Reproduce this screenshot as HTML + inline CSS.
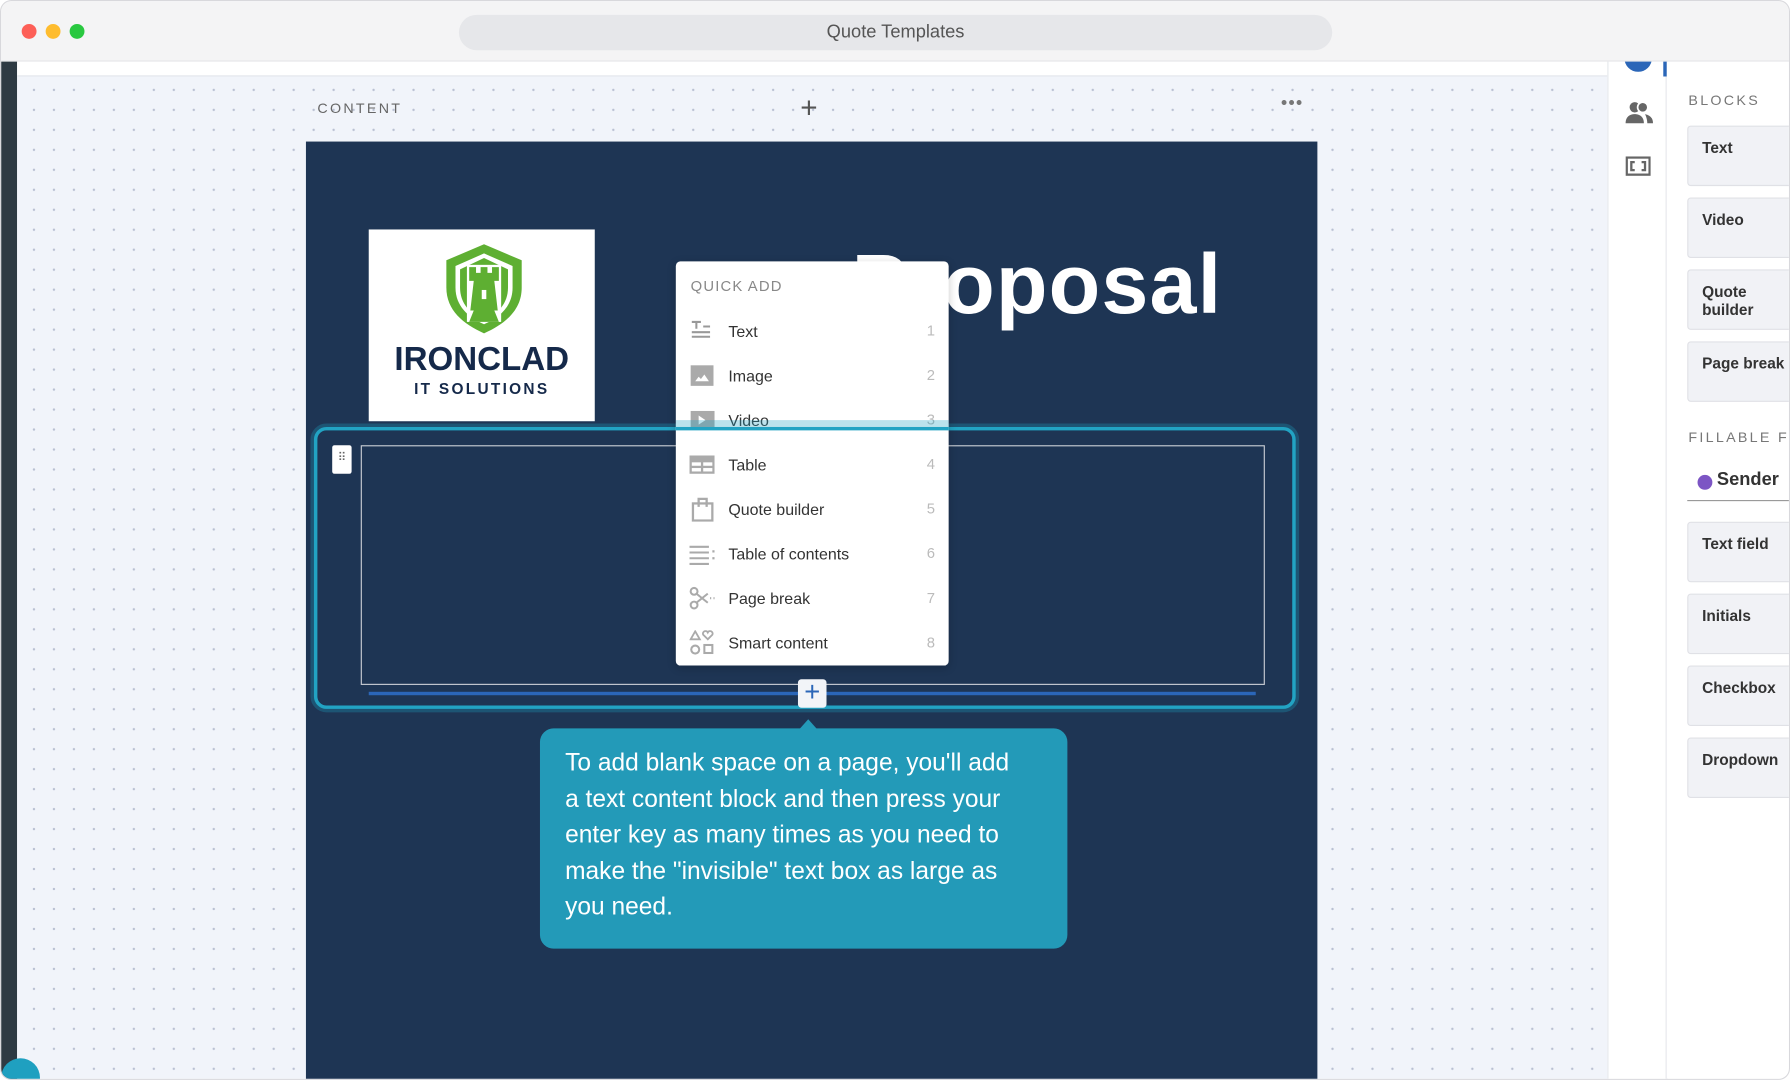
<!DOCTYPE html>
<html><head><meta charset="utf-8"><style>
*{margin:0;padding:0;box-sizing:border-box}
html,body{width:1790px;height:1080px;overflow:hidden;background:#fff;font-family:"Liberation Sans",sans-serif}
#s{position:absolute;left:0;top:0;width:1568px;height:946px;transform:scale(1.14158);transform-origin:0 0;background:#fff;border:1px solid #d8d8dc;border-radius:10px;overflow:hidden}
.a{position:absolute}
.dots{background-color:#f1f4fa;background-image:radial-gradient(circle,#b9c0d2 0.9px,transparent 1.2px);background-size:17.5px 17.5px;background-position:6px 3px}
.mi{position:absolute;left:12px;height:39px;width:215px;font-size:14px;color:#333;display:flex;align-items:center}
.mi svg{width:22px;height:22px;margin-right:12px}
.mi .n{position:absolute;right:0;color:#bbb;font-size:13px}
.card{position:absolute;left:1477px;width:100px;height:53px;background:#f1f2f6;border:1px solid #e0e1e6;border-radius:3px;font-size:13.5px;font-weight:bold;color:#333;padding:11px 12px;line-height:16px;white-space:nowrap}
.lbl{position:absolute;font-size:12.5px;letter-spacing:2px;color:#777}
</style></head><body><div id="s">
<div class="a" style="left:1422px;top:38px;width:24px;height:24px;border-radius:50%;background:#2b66b8"></div>
<!-- title bar -->
<div class="a" style="left:0;top:0;width:1568px;height:53px;background:#f4f4f5;border-bottom:1px solid #e4e4e6"></div>
<div class="a" style="left:18px;top:20px;width:13px;height:13px;border-radius:50%;background:#fd5f57"></div>
<div class="a" style="left:39px;top:20px;width:13px;height:13px;border-radius:50%;background:#febc2e"></div>
<div class="a" style="left:60px;top:20px;width:13px;height:13px;border-radius:50%;background:#29c840"></div>
<div class="a" style="left:401px;top:12px;width:765px;height:31px;border-radius:16px;background:#e6e7ea;text-align:center;line-height:31px;font-size:16px;color:#555">Quote Templates</div>
<!-- left strip -->
<div class="a" style="left:0;top:53px;width:14px;height:893px;background:#2e3a43"></div>
<div class="a" style="left:14px;top:53px;width:1393px;height:13px;background:#fff;border-bottom:1px solid #e3e6ec"></div>
<div class="a dots" style="left:14px;top:66px;width:1393px;height:880px"></div>
<div class="a" style="left:0;top:926px;width:34px;height:34px;border-radius:50%;background:#1fa0c0"></div>
<div class="lbl" style="left:277px;top:87px;color:#666">CONTENT</div>
<div class="a" style="left:700px;top:78px;font-size:26px;color:#555;font-weight:300">+</div>
<div class="a" style="left:1121px;top:81px;font-size:16px;color:#777;letter-spacing:1px">•••</div>
<!-- page -->
<div class="a" style="left:267px;top:123px;width:886px;height:823px;background:#1e3554"></div>
<div class="a" style="left:322px;top:200px;width:198px;height:168px;background:#fff">
<svg class="a" style="left:64px;top:11px" width="74" height="82" viewBox="0 0 74 82"><path d="M37 2 L70 16 L70 40 C70 60 55 72 37 80 C19 72 4 60 4 40 L4 16 Z" fill="#5eaf32"/><path d="M37 10 L62 21 L62 40 C62 56 51 66 37 72 C23 66 12 56 12 40 L12 21 Z" fill="#fff"/><path d="M37 14 L58 24 L58 40 C58 54 49 63 37 69 C25 63 16 54 16 40 L16 24 Z" fill="#5eaf32"/><rect x="22" y="20" width="30" height="50" fill="#fff"/><path d="M24 22h6v5h4v-5h6v5h4v-5h6v12h-4l3 26H25l3-26h-4z" fill="#5eaf32"/><path d="M28 60 L24 70 L50 70 L46 60Z" fill="#5eaf32"/><rect x="35" y="42" width="4" height="8" fill="#fff"/></svg>
<div class="a" style="left:0;top:98px;width:198px;text-align:center;font-size:29px;font-weight:bold;color:#15294a;letter-spacing:0">IRONCLAD</div>
<div class="a" style="left:0;top:132px;width:198px;text-align:center;font-size:13.5px;font-weight:bold;color:#15294a;letter-spacing:2px">IT SOLUTIONS</div>
</div>
<div class="a" style="left:745px;top:205px;font-size:74px;font-weight:bold;color:#fff;letter-spacing:1px">Proposal</div>
<!-- selected block -->
<div class="a" style="left:271px;top:370px;width:866px;height:253px;border:6px solid rgba(31,160,192,0.3);border-radius:14px"></div>
<div class="a" style="left:274px;top:373px;width:860px;height:247px;border:3px solid #22a3c3;border-radius:11px"></div>
<div class="a" style="left:315px;top:389px;width:792px;height:210px;border:1px solid #c8ccd4"></div>
<div class="a" style="left:290px;top:389px;width:17px;height:25px;background:#fff;border-radius:2px;color:#666;font-size:10px;text-align:center;line-height:24px">⠿</div>
<div class="a" style="left:322px;top:605px;width:777px;height:3px;background:#2b66b8"></div>
<div class="a" style="left:698px;top:594px;width:25px;height:25px;background:#f2f4f8;border-radius:3px;color:#2b66b8;font-size:24px;text-align:center;line-height:24px">+</div>
<!-- menu -->
<div class="a" style="left:591px;top:228px;width:239px;height:354px;background:#fff;border-radius:4px;box-shadow:0 2px 8px rgba(0,0,0,.2)">
<div class="a" style="left:13px;top:14px;font-size:13px;letter-spacing:1px;color:#888">QUICK ADD</div>
<div class="mi" style="top:41px"><svg viewBox="0 0 22 22"><path d="M2 3h8M6 3v6M12 7h6M2 12h16M2 16h16" stroke="#999" stroke-width="1.8" fill="none"/></svg>Text<span class="n">1</span></div>
<div class="mi" style="top:80px"><svg viewBox="0 0 22 22"><rect x="1" y="2" width="20" height="18" fill="#aaa"/><path d="M5 16l3-4 2 2 3-4 4 6z" fill="#fff"/></svg>Image<span class="n">2</span></div>
<div class="mi" style="top:119px"><svg viewBox="0 0 22 22"><rect x="1" y="3" width="21" height="16" fill="#aaa"/><path d="M8 7l6 4-6 4z" fill="#fff"/></svg>Video<span class="n">3</span></div>
<div class="mi" style="top:158px"><svg viewBox="0 0 22 22"><rect x="0" y="3" width="22" height="16" fill="#aaa"/><rect x="2" y="9" width="8" height="3" fill="#fff"/><rect x="12" y="9" width="8" height="3" fill="#fff"/><rect x="2" y="14" width="8" height="3" fill="#fff"/><rect x="12" y="14" width="8" height="3" fill="#fff"/></svg>Table<span class="n">4</span></div>
<div class="mi" style="top:197px"><svg viewBox="0 0 22 22"><rect x="3" y="6" width="17" height="15" stroke="#aaa" stroke-width="2" fill="none"/><path d="M8 9V2h7v7" stroke="#aaa" stroke-width="2" fill="none"/></svg>Quote builder<span class="n">5</span></div>
<div class="mi" style="top:236px"><svg viewBox="0 0 22 22"><path d="M0 5h17M0 10h17M0 15h17M0 20h17" stroke="#aaa" stroke-width="1.8"/><path d="M21 8v2M21 14v2" stroke="#aaa" stroke-width="2"/></svg>Table of contents<span class="n">6</span></div>
<div class="mi" style="top:275px"><svg viewBox="0 0 22 22"><circle cx="4" cy="5" r="3" stroke="#aaa" stroke-width="1.8" fill="none"/><circle cx="4" cy="17" r="3" stroke="#aaa" stroke-width="1.8" fill="none"/><path d="M6 7l10 8M6 15l10-8" stroke="#aaa" stroke-width="1.8"/><path d="M18 11h1M21 11h1" stroke="#aaa" stroke-width="1.8"/></svg>Page break<span class="n">7</span></div>
<div class="mi" style="top:314px"><svg viewBox="0 0 22 22"><path d="M5 1l4 7H1z" stroke="#aaa" stroke-width="1.6" fill="none"/><path d="M16 8l-4-4a2 2 0 0 1 4-2 2 2 0 0 1 4 2z" stroke="#aaa" stroke-width="1.6" fill="none"/><circle cx="5" cy="17" r="3.5" stroke="#aaa" stroke-width="1.8" fill="none"/><rect x="13" y="13" width="7" height="7" stroke="#aaa" stroke-width="1.8" fill="none"/></svg>Smart content<span class="n">8</span></div>
</div>
<!-- teal line overlaying menu -->
<div class="a" style="left:591px;top:367px;width:239px;height:6px;background:rgba(31,160,192,0.3)"></div>
<div class="a" style="left:591px;top:373px;width:239px;height:3px;background:#22a3c3"></div>
<!-- tooltip -->
<div class="a" style="left:699px;top:629px;width:0;height:0;border-left:8px solid transparent;border-right:8px solid transparent;border-bottom:9px solid #239ab8"></div>
<div class="a" style="left:472px;top:637px;width:462px;height:193px;background:#239ab8;border-radius:12px;color:#fff;font-size:21.5px;line-height:31.5px;padding:15px 22px;white-space:nowrap">To add blank space on a page, you'll add<br>a text content block and then press your<br>enter key as many times as you need to<br>make the "invisible" text box as large as<br>you need.</div>
<!-- right icon column -->
<div class="a" style="left:1407px;top:53px;width:52px;height:893px;background:#fff;border-left:1px solid #e6e8ec;border-right:1px solid #e6e8ec"></div>
<div class="a" style="left:1422px;top:38px;width:24px;height:24px;border-radius:50%;background:#2b66b8;clip-path:inset(15px 0 0 0)"></div>
<div class="a" style="left:1456px;top:53px;width:3px;height:13px;background:#2b66b8"></div>
<svg class="a" style="left:1422px;top:87px" width="26" height="22" viewBox="0 0 26 22"><circle cx="9" cy="6" r="4.5" fill="#666"/><path d="M1 20c0-6 4-8 8-8s8 2 8 8z" fill="#666"/><circle cx="16" cy="6" r="4.5" fill="#666" stroke="#fff" stroke-width="1.5"/><path d="M18 12c4 1 7 3 7 8h-5c0-3-1-6-2-8z" fill="#666"/></svg>
<svg class="a" style="left:1423px;top:136px" width="22" height="18" viewBox="0 0 22 18"><rect x="1" y="1" width="20" height="15" stroke="#666" stroke-width="2" fill="none"/><path d="M8 5H5v7h3M14 5h3v7h-3" stroke="#666" stroke-width="2" fill="none"/></svg>
<!-- panel -->
<div class="a" style="left:1460px;top:53px;width:108px;height:893px;background:#fff"></div>
<div class="lbl" style="left:1478px;top:80px">BLOCKS</div>
<div class="card" style="top:109px">Text</div>
<div class="card" style="top:172px">Video</div>
<div class="card" style="top:235px">Quote<br>builder</div>
<div class="card" style="top:298px">Page break</div>
<div class="lbl" style="left:1478px;top:375px;white-space:nowrap">FILLABLE FIELDS</div>
<div class="a" style="left:1486px;top:415px;width:13px;height:13px;border-radius:50%;background:#7c55c4"></div>
<div class="a" style="left:1503px;top:411px;font-size:16px;font-weight:bold;color:#333">Sender</div>
<div class="a" style="left:1477px;top:437px;width:91px;height:1px;background:#999"></div>
<div class="card" style="top:456px">Text field</div>
<div class="card" style="top:519px">Initials</div>
<div class="card" style="top:582px">Checkbox</div>
<div class="card" style="top:645px">Dropdown</div>
</div></body></html>
